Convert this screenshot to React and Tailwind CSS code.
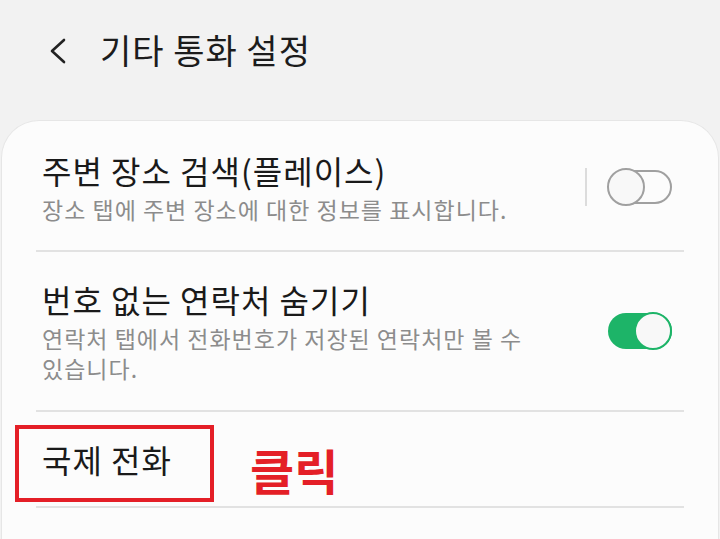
import React from "react";

const font = { fontFamily: '"Noto Sans CJK KR", "Noto Sans", sans-serif' };

function Toggle({ on }) {
  if (on) {
    return (
      <div className="relative w-[64px] h-[36px]">
        <div className="absolute left-0 top-0 w-[64px] h-[36px] rounded-full bg-[#1db468]" />
        <div className="absolute right-0 top-[-1px] w-[38px] h-[38px] rounded-full bg-[#f8f8f8] border-2 border-[#1db468]" />
      </div>
    );
  }
  return (
    <div className="relative w-[65px] h-[38px]">
      <div className="absolute right-0 top-[2px] w-[60px] h-[34px] rounded-full border-2 border-[#a0a0a0]" />
      <div className="absolute left-0 top-0 w-[38px] h-[38px] rounded-full bg-[#f8f8f8] border-2 border-[#a0a0a0]" />
    </div>
  );
}

function Divider() {
  return <div className="mx-[34px] h-[2px] bg-[#e2e2e2]" />;
}

export default function App() {
  return (
    <div className="w-[720px] h-[539px] overflow-hidden bg-[#f2f2f2]" style={font}>
      {/* header */}
      <div className="h-[120px] flex items-start pt-[29px]">
        <div className="w-[100px] flex justify-start pl-[45px] pt-[8px]">
          <svg width="24" height="28" viewBox="0 0 24 28" fill="none">
            <path d="M19 3 L7 14 L19 25" stroke="#222" strokeWidth="2.6" strokeLinecap="round" strokeLinejoin="round" />
          </svg>
        </div>
        <h1 className="text-[34px] leading-[42px] tracking-[1px] text-[#1c1c1c]">기타 통화 설정</h1>
      </div>

      {/* card */}
      <div className="mx-px h-[430px] bg-[#fcfcfc] rounded-t-[38px] border-t border-x border-[#e6e6e6]">
        <div className="flex items-center pl-[40px] pr-[46px] pt-[29px] pb-[26px]">
          <div className="flex-1">
            <div className="text-[32px] leading-[40px] tracking-[1px] text-[#1a1a1a]">주변 장소 검색(플레이스)</div>
            <div className="mt-1 text-[23px] leading-[30px] tracking-[1px] text-[#8c8c8c]">장소 탭에 주변 장소에 대한 정보를 표시합니다.</div>
          </div>
          <div className="w-[2px] h-[38px] bg-[#dcdcdc] mr-[20px]" />
          <Toggle on={false} />
        </div>
        <Divider />
        <div className="flex items-center pl-[40px] pr-[46px] pt-[27px] pb-[27px]">
          <div className="flex-1 pr-[30px]">
            <div className="text-[32px] leading-[40px] tracking-[1px] text-[#1a1a1a]">번호 없는 연락처 숨기기</div>
            <div className="mt-1 text-[23px] leading-[30px] tracking-[1px] text-[#8c8c8c] max-w-[500px] break-keep">연락처 탭에서 전화번호가 저장된 연락처만 볼 수 있습니다.</div>
          </div>
          <Toggle on />
        </div>
        <Divider />
        <div className="relative pl-[40px] pt-[27px] pb-[27px]">
          <div className="text-[32px] leading-[40px] tracking-[1px] text-[#1a1a1a]">국제 전화</div>
          <div className="absolute left-[13px] top-[13px] w-[199px] h-[77px] border-4 border-[#e41f27]" />
          <div className="absolute left-[248px] top-[28px] text-[48px] leading-[58px] font-bold text-[#e41f27]">클릭</div>
        </div>
        <Divider />
      </div>
    </div>
  );
}
